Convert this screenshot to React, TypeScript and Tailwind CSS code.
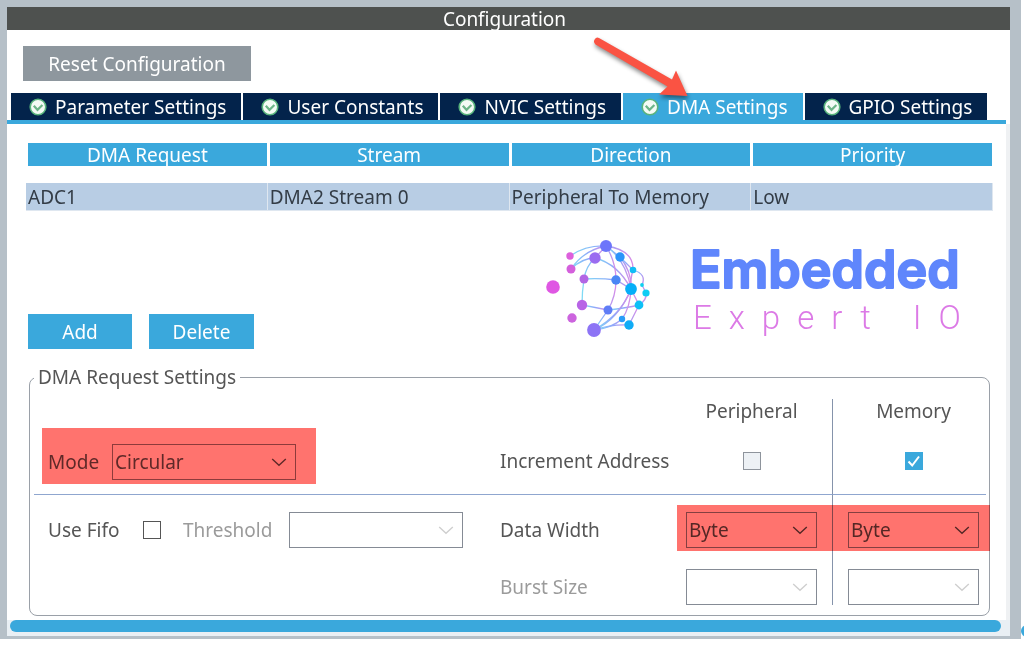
import { useState } from "react";
import type { ReactNode } from "react";

const TABS = [
	"Parameter Settings",
	"User Constants",
	"NVIC Settings",
	"DMA Settings",
	"GPIO Settings",
];

const COLUMNS = ["DMA Request", "Stream", "Direction", "Priority"];

const REQUESTS = [["ADC1", "DMA2 Stream 0", "Peripheral To Memory", "Low"]];

export default function App() {
	return (
		<div className="flex bg-white font-['Noto_Sans','Open_Sans',sans-serif] text-[19px] leading-6 text-[#555555]">
			<main className="min-w-0 flex-1 bg-[#b6c0c8] pt-[7px] pr-[11px] pb-[3px] pl-[7px]">
				<ConfigurationPanel />
			</main>
			<div className="flex w-[3px] flex-col justify-end overflow-hidden">
				<div className="mb-0.5 size-3 rounded-full bg-[#3aa8dc]" />
			</div>
		</div>
	);
}

function ConfigurationPanel() {
	const [activeTab, setActiveTab] = useState("DMA Settings");

	return (
		<section className="bg-white">
			<h1 className="h-[23px] bg-[#4e514f] pr-2 text-center leading-[25px] text-white">
				Configuration
			</h1>
			<div className="px-4 pt-4">
				<button
					type="button"
					className="h-[35px] w-[228px] bg-[#8e979e] text-white"
				>
					Reset Configuration
				</button>
			</div>

			<div role="tablist" className="mt-3 flex gap-0.5 pl-1 text-white">
				{TABS.map((tab) => (
					<div key={tab} className="relative">
						<button
							type="button"
							role="tab"
							aria-selected={tab === activeTab}
							onClick={() => setActiveTab(tab)}
							className={`flex h-[27px] items-center gap-2 pr-[15px] pl-[18px] whitespace-nowrap ${
								tab === activeTab ? "bg-[#3aa8dc]" : "bg-[#03234b]"
							}`}
						>
							<StatusIcon />
							{tab}
						</button>
						{tab === "DMA Settings" && <ArrowCallout />}
					</div>
				))}
			</div>
			<div className="mr-1 h-1 bg-[#3aa8dc]" />

			<div className="border-r-4 border-[#eff1f3] pt-[19px] pr-[13px] pl-[19px]">
				<RequestTable />
				<div className="mt-[27px] flex h-[111px] justify-between pr-[27px]">
					<div className="flex gap-[17px] self-end pl-0.5 text-white">
						<button type="button" className="h-[35px] w-[104px] bg-[#3aa8dc]">
							Add
						</button>
						<button type="button" className="h-[35px] w-[105px] bg-[#3aa8dc]">
							Delete
						</button>
					</div>
					<Logo />
				</div>
				<RequestSettings />
			</div>

			<div className="bg-[#e9eff4] pr-[9px] pb-1 pl-[3px]">
				<div className="h-3 rounded-full bg-[#3aa8dc]" />
			</div>
		</section>
	);
}

function RequestTable() {
	return (
		<table className="w-full table-fixed border-separate border-spacing-0">
			<thead>
				<tr>
					{COLUMNS.map((column) => (
						<th key={column} className="p-0 pr-px pb-[17px] pl-0.5 font-normal">
							<div className="h-[23px] bg-[#3aa8dc] leading-[25px] text-white">
								{column}
							</div>
						</th>
					))}
				</tr>
			</thead>
			<tbody>
				{REQUESTS.map((row) => (
					<tr key={row[0]} className="bg-[#b8cde4] text-[#333c46]">
						{row.map((value) => (
							<td
								key={value}
								className="h-7 border-r border-b border-[#dfe7f0] p-0 pl-0.5"
							>
								{value}
							</td>
						))}
					</tr>
				))}
			</tbody>
		</table>
	);
}

function RequestSettings() {
	const [mode, setMode] = useState("Circular");
	const [useFifo, setUseFifo] = useState(false);
	const [memoryIncrement, setMemoryIncrement] = useState(true);

	return (
		<div className="pb-1">
			<fieldset className="mt-4 mr-[3px] ml-[3px] min-w-0 rounded-lg border border-[#9aa0a8] pr-[3px] pb-[10px] pl-1">
				<legend className="px-1">DMA Request Settings</legend>
				<div className="grid grid-cols-[minmax(0,1fr)_177px_155px_154px] pt-[10px]">
					<div className="col-span-2" />
					<div className="pr-[15px] pl-[9px] text-center">Peripheral</div>
					<div className="border-l border-[#8593ab] pr-[7px] pl-[15px] text-center">
						Memory
					</div>

					<div className="h-[72px] border-b border-[#8fa6cf] pt-[5px] pl-2">
						<div className="flex w-[274px] items-center bg-[#ff736e] pt-4 pb-1 pl-[6px] text-[#5f2928]">
							<label htmlFor="mode" className="w-16">
								Mode
							</label>
							<div className="w-[184px]">
								<Select
									id="mode"
									value={mode}
									options={["Circular", "Normal"]}
									onChange={setMode}
									className="border-[#8d3b3b]"
								/>
							</div>
						</div>
					</div>
					<div className="flex items-center border-b border-[#8fa6cf] pt-[5px]">
						Increment Address
					</div>
					<div className="flex items-center justify-center border-b border-[#8fa6cf] pt-[5px] pr-[15px] pl-[9px]">
						<CheckBox label="Increment peripheral address" disabled />
					</div>
					<div className="flex items-center justify-center border-b border-l border-b-[#8fa6cf] border-l-[#8593ab] pt-[5px] pr-[7px] pl-[15px]">
						<CheckBox
							label="Increment memory address"
							checked={memoryIncrement}
							onChange={setMemoryIncrement}
						/>
					</div>

					<div className="flex h-[70px] items-center pl-[14px]">
						<label htmlFor="use-fifo" className="w-[95px]">
							Use Fifo
						</label>
						<CheckBox
							id="use-fifo"
							label="Use Fifo"
							checked={useFifo}
							onChange={setUseFifo}
						/>
						<label
							htmlFor="threshold"
							className="ml-[22px] w-[106px] text-[#9b9b9b]"
						>
							Threshold
						</label>
						<div className="w-[174px]">
							<Select id="threshold" disabled />
						</div>
					</div>
					<div className="flex items-center">Data Width</div>
					<div className="relative col-span-2 grid grid-cols-[155px_154px]">
						<SelectCell>
							<Select label="Peripheral data width" value="Byte" />
						</SelectCell>
						<SelectCell divided>
							<Select label="Memory data width" value="Byte" />
						</SelectCell>
						<div className="pointer-events-none absolute top-[10px] -right-1 bottom-[14px] left-0 bg-[#ff736e] mix-blend-multiply" />
					</div>

					<div className="h-10" />
					<div className="flex items-center pt-1 text-[#9b9b9b]">
						Burst Size
					</div>
					<SelectCell>
						<div className="w-full pt-1">
							<Select label="Peripheral burst size" disabled />
						</div>
					</SelectCell>
					<SelectCell divided>
						<div className="w-full pt-1">
							<Select label="Memory burst size" disabled />
						</div>
					</SelectCell>
				</div>
			</fieldset>
		</div>
	);
}

function SelectCell({
	children,
	divided = false,
}: {
	children: ReactNode;
	divided?: boolean;
}) {
	return (
		<div
			className={`flex items-center ${
				divided
					? "border-l border-[#8593ab] pr-[7px] pl-[15px]"
					: "pr-[15px] pl-[9px]"
			}`}
		>
			{children}
		</div>
	);
}

interface SelectProps {
	id?: string;
	label?: string;
	value?: string;
	options?: string[];
	disabled?: boolean;
	onChange?: (value: string) => void;
	className?: string;
}

function Select({
	id,
	label,
	value = "",
	options = ["Byte", "Half Word", "Word"],
	disabled = false,
	onChange,
	className = "border-[#858b95]",
}: SelectProps) {
	const [current, setCurrent] = useState(value);

	return (
		<div className="relative w-full">
			<select
				id={id}
				aria-label={label}
				value={current}
				disabled={disabled}
				onChange={(e) => {
					setCurrent(e.target.value);
					onChange?.(e.target.value);
				}}
				className={`block h-9 w-full appearance-none border pl-0.5 opacity-100 ${className}`}
			>
				{disabled ? (
					<option value="" />
				) : (
					options.map((option) => <option key={option}>{option}</option>)
				)}
			</select>
			<svg
				className={`pointer-events-none absolute top-[14px] right-[9px] ${
					disabled ? "text-[#cfcfcf]" : "text-current"
				}`}
				width="16"
				height="9"
				viewBox="0 0 16 9"
				fill="none"
				stroke="currentColor"
				strokeWidth="1.4"
				aria-hidden="true"
			>
				<path d="M1.2 1l6.8 6.3L14.8 1" />
			</svg>
		</div>
	);
}

interface CheckBoxProps {
	id?: string;
	label: string;
	checked?: boolean;
	disabled?: boolean;
	onChange?: (checked: boolean) => void;
}

function CheckBox({
	id,
	label,
	checked = false,
	disabled = false,
	onChange,
}: CheckBoxProps) {
	return (
		<span className="relative block size-[18px] shrink-0">
			<input
				id={id}
				type="checkbox"
				aria-label={label}
				checked={checked}
				disabled={disabled}
				onChange={(e) => onChange?.(e.target.checked)}
				className="block size-[18px] appearance-none border border-[#555555] bg-white checked:border-[#3aa8dc] checked:bg-[#3aa8dc] disabled:border-[#8e949c] disabled:bg-[#edf1f5]"
			/>
			{checked && (
				<svg
					className="pointer-events-none absolute inset-0"
					viewBox="0 0 18 18"
					fill="none"
					stroke="white"
					strokeWidth="2"
					aria-hidden="true"
				>
					<path d="M3.5 9.5l3.7 4L14 4.5" />
				</svg>
			)}
		</span>
	);
}

function StatusIcon() {
	return (
		<svg width="18" height="18" viewBox="0 0 18 18" fill="none" aria-hidden="true">
			<circle cx="9" cy="9" r="7.8" fill="#f4fbf5" stroke="#58b37c" strokeWidth="1.6" />
			<path d="M4.8 7.8l3.7 4L13.4 7" stroke="#6db588" strokeWidth="2.2" />
		</svg>
	);
}

// Points at the DMA tab from the upper left
function ArrowCallout() {
	return (
		<svg
			className="pointer-events-none absolute -top-[59px] -left-[33px] max-w-none drop-shadow-[1px_3px_2px_rgba(0,0,0,0.45)]"
			width="104"
			height="70"
			viewBox="0 0 104 70"
			aria-hidden="true"
		>
			<path
				d="M9 4L82 45.5L86 36.5L97.5 62L69 60.5L77.5 52.5L5.5 10.5Q3 8 4.6 5.4Q6.3 2.8 9 4Z"
				fill="#fa5343"
			/>
		</svg>
	);
}

function Logo() {
	return (
		<svg
			width="420"
			height="104"
			viewBox="0 0 420 104"
			role="img"
			aria-label="Embedded Expert IO"
			className="shrink-0 overflow-visible"
		>
			<defs>
				<linearGradient id="mesh" x1="0" y1="0" x2="1" y2="0">
					<stop offset="0" stopColor="#7fdcf5" />
					<stop offset="0.5" stopColor="#8fa8fa" />
					<stop offset="1" stopColor="#d98be6" />
				</linearGradient>
			</defs>
			<g fill="none" stroke="url(#mesh)" strokeWidth="1.3">
				<path d="M24 18Q40 7 60 8Q88 12 87 32" />
				<path d="M25 31Q38 12 60 8" />
				<path d="M25 31Q36 20 49 20L60 8" />
				<path d="M49 20Q40 28 38 41Q36 54 36 67L62 72" />
				<path d="M38 41Q54 40 70 42L85 51L93 67" />
				<path d="M49 20Q72 26 85 51" />
				<path d="M60 8Q70 24 70 42Q70 58 62 72L48 92" />
				<path d="M60 8L74 19Q86 34 85 51" />
				<path d="M60 8Q80 22 85 51" />
				<path d="M74 19L87 32Q84 42 85 51" />
				<path d="M87 32Q101 36 96 47L100 55Q101 62 93 67" />
				<path d="M62 72Q80 70 93 67L83 87" />
				<path d="M85 51Q76 76 48 92" />
				<path d="M85 51Q84 70 76 81Q66 90 48 92" />
				<path d="M85 51Q72 82 48 92Q66 86 83 87" />
			</g>
			<circle cx="7" cy="49" r="6.8" fill="#df57e3" />
			<circle cx="24" cy="18" r="3.7" fill="#dd60dc" />
			<circle cx="25" cy="31" r="4.5" fill="#d45fdc" />
			<circle cx="26" cy="80" r="4.7" fill="#cc64de" />
			<circle cx="36" cy="67" r="5.2" fill="#b864e6" />
			<circle cx="38" cy="41" r="4.5" fill="#b266e4" />
			<circle cx="49" cy="20" r="5.7" fill="#9a6cf0" />
			<circle cx="60" cy="8" r="6" fill="#6d76fa" />
			<circle cx="48" cy="92" r="6.9" fill="#8d74f5" />
			<circle cx="62" cy="72" r="4.5" fill="#5f7df6" />
			<circle cx="70" cy="42" r="4.7" fill="#4a86f5" />
			<circle cx="74" cy="19" r="4.7" fill="#2c94fa" />
			<circle cx="76" cy="81" r="3.2" fill="#2a9cf8" />
			<circle cx="85" cy="51" r="5.9" fill="#06aef8" />
			<circle cx="83" cy="87" r="4.7" fill="#10acf6" />
			<circle cx="87" cy="32" r="3.3" fill="#10bdf6" />
			<circle cx="93" cy="67" r="4.4" fill="#0ec0f6" />
			<circle cx="100" cy="55" r="3.6" fill="#0fcdf4" />
			<circle cx="96" cy="47" r="1.9" fill="#0fd0ee" />
			<text
				x="144"
				y="50"
				fill="#5f86fc"
				stroke="#5f86fc"
				strokeWidth="2"
				strokeLinejoin="round"
				className="font-[Inter,sans-serif] text-[52px] font-semibold"
			>
				Embedded
			</text>
			<text
				x="147"
				y="91"
				fill="#dc7ae6"
				className="font-[Roboto,sans-serif] text-[33px] font-light tracking-[17px]"
			>
				Expert IO
			</text>
		</svg>
	);
}
